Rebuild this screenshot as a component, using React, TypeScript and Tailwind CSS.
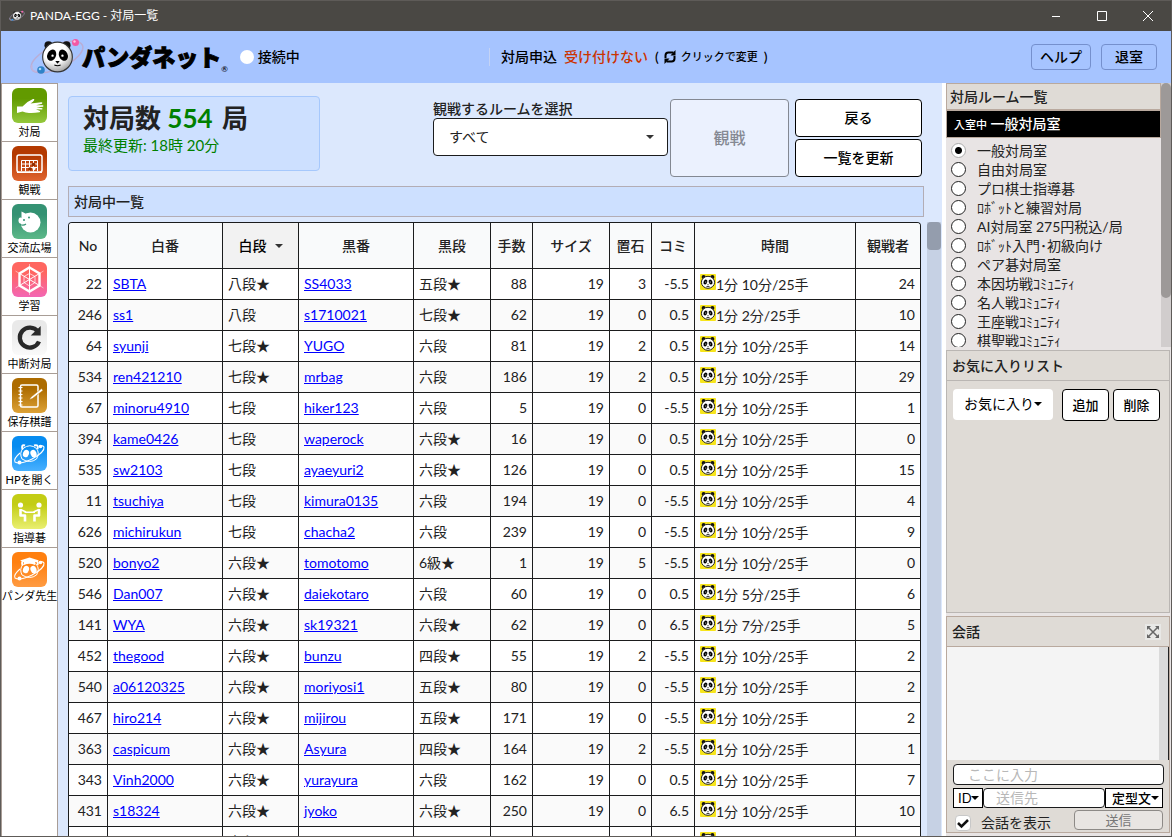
import React from "react";

interface Game {
  no: string;
  white: string;
  whiteRank: string;
  black: string;
  blackRank: string;
  moves: string;
  size: string;
  handicap: string;
  komi: string;
  time: string;
  viewers: string;
}

const game = (
  no: string,
  white: string,
  whiteRank: string,
  black: string,
  blackRank: string,
  moves: string,
  handicap: string,
  komi: string,
  viewers: string,
  time = "1分 10分/25手",
  size = "19"
): Game => ({ no, white, whiteRank, black, blackRank, moves, size, handicap, komi, time, viewers });

const games: Game[] = [
  game("22", "SBTA", "八段★", "SS4033", "五段★", "88", "3", "-5.5", "24"),
  game("246", "ss1", "八段", "s1710021", "七段★", "62", "0", "0.5", "10", "1分 2分/25手"),
  game("64", "syunji", "七段★", "YUGO", "六段", "81", "2", "0.5", "14"),
  game("534", "ren421210", "七段★", "mrbag", "六段", "186", "2", "0.5", "29"),
  game("67", "minoru4910", "七段", "hiker123", "六段", "5", "0", "-5.5", "1"),
  game("394", "kame0426", "七段", "waperock", "六段★", "16", "0", "0.5", "0"),
  game("535", "sw2103", "七段", "ayaeyuri2", "六段★", "126", "0", "0.5", "15"),
  game("11", "tsuchiya", "七段", "kimura0135", "六段", "194", "0", "-5.5", "4"),
  game("626", "michirukun", "七段", "chacha2", "六段", "239", "0", "-5.5", "9"),
  game("520", "bonyo2", "六段★", "tomotomo", "6級★", "1", "5", "-5.5", "0"),
  game("546", "Dan007", "六段★", "daiekotaro", "六段", "60", "0", "0.5", "6", "1分 5分/25手"),
  game("141", "WYA", "六段★", "sk19321", "六段★", "62", "0", "6.5", "5", "1分 7分/25手"),
  game("452", "thegood", "六段★", "bunzu", "四段★", "55", "2", "-5.5", "2"),
  game("540", "a06120325", "六段★", "moriyosi1", "五段★", "80", "0", "-5.5", "2"),
  game("467", "hiro214", "六段★", "mijirou", "五段★", "171", "0", "-5.5", "2"),
  game("363", "caspicum", "六段★", "Asyura", "四段★", "164", "2", "-5.5", "1"),
  game("343", "Vinh2000", "六段★", "yurayura", "六段", "162", "0", "0.5", "7"),
  game("431", "s18324", "六段★", "jyoko", "六段★", "250", "0", "6.5", "10"),
  game("", "", "六段", "", "", "", "", "", "", "1分 10分/25手", ""),
];

const rooms = [
  "一般対局室",
  "自由対局室",
  "プロ棋士指導碁",
  "ﾛﾎﾞｯﾄと練習対局",
  "AI対局室 275円税込/局",
  "ﾛﾎﾞｯﾄ入門･初級向け",
  "ペア碁対局室",
  "本因坊戦ｺﾐｭﾆﾃｨ",
  "名人戦ｺﾐｭﾆﾃｨ",
  "王座戦ｺﾐｭﾆﾃｨ",
  "棋聖戦ｺﾐｭﾆﾃｨ",
];

function Caret({ className }: { className: string }) {
  return (
    <svg viewBox="0 0 8 4" className={className} aria-hidden="true">
      <path d="M0 0h8L4 4z" fill="currentColor" />
    </svg>
  );
}

function PandaHead() {
  return (
    <g>
      <circle cx="10" cy="7" r="4.5" fill="#111" />
      <circle cx="30" cy="7" r="4.5" fill="#111" />
      <circle cx="20" cy="20" r="16.5" fill="url(#face)" stroke="#333" strokeWidth="1.2" />
      <ellipse cx="13.5" cy="18" rx="4.8" ry="6.5" fill="#000" transform="rotate(24 13.5 18)" />
      <ellipse cx="26.5" cy="18" rx="4.8" ry="6.5" fill="#000" transform="rotate(-24 26.5 18)" />
      <circle cx="14.5" cy="18.5" r="1.3" fill="#fff" />
      <circle cx="25.5" cy="18.5" r="1.3" fill="#fff" />
      <path d="M17.5 24.5h5l-2.5 3z" fill="#000" />
      <path d="M16.5 29q3.5 1.5 7 0" fill="none" stroke="#000" strokeWidth="1.2" />
    </g>
  );
}

function OrbitPanda({ className }: { className: string }) {
  return (
    <svg viewBox="0 0 56 40" className={className} aria-hidden="true">
      <defs>
        <radialGradient id="face" cx="0.4" cy="0.3" r="0.75">
          <stop offset="0.5" stopColor="#fff" />
          <stop offset="1" stopColor="#9a9a9a" />
        </radialGradient>
      </defs>
      <ellipse cx="28" cy="20" rx="28" ry="11.5" transform="rotate(-25 28 20)" fill="none" stroke="#b9aed6" strokeWidth="1.5" />
      <g transform="translate(10.5 2) scale(.9)">
        <PandaHead />
      </g>
      <path d="M3 28Q1 36 11 34" fill="none" stroke="#c0b5dd" strokeWidth="1.5" />
      <circle cx="46.5" cy="5.5" r="3.5" fill="#f358a6" />
      <circle cx="45.5" cy="4.5" r="1.2" fill="#ffc2e0" />
      <circle cx="12" cy="33" r="3.8" fill="#2f83c8" />
      <circle cx="11" cy="32" r="1.3" fill="#a9d8f7" />
    </svg>
  );
}

function PandaBadge() {
  return (
    <svg viewBox="0 0 16 16" className="h-4 w-4 shrink-0 self-start" aria-hidden="true">
      <rect width="16" height="16" rx="1" fill="#f7e51b" />
      <circle cx="3.6" cy="3" r="2" fill="#111" />
      <circle cx="12.4" cy="3" r="2" fill="#111" />
      <ellipse cx="8" cy="8.3" rx="6.6" ry="6" fill="#fff" stroke="#222" strokeWidth="1" />
      <ellipse cx="5.4" cy="8" rx="1.8" ry="2.5" transform="rotate(24 5.4 8)" />
      <ellipse cx="10.6" cy="8" rx="1.8" ry="2.5" transform="rotate(-24 10.6 8)" />
      <circle cx="5.8" cy="8" r=".6" fill="#fff" />
      <circle cx="10.2" cy="8" r=".6" fill="#fff" />
      <path d="M7 10.5h2l-1 1zM6.5 12.2h3v.7h-3z" />
    </svg>
  );
}

interface TileProps {
  id: string;
  from: string;
  to: string;
  children: React.ReactNode;
}

function Tile({ id, from, to, children }: TileProps) {
  return (
    <svg viewBox="0 0 35 35" className="h-[35px] w-[35px]" aria-hidden="true">
      <defs>
        <linearGradient id={id} x1="0" y1="0" x2="0" y2="1">
          <stop offset="0.3" stopColor={from} />
          <stop offset="1" stopColor={to} />
        </linearGradient>
      </defs>
      <rect width="35" height="35" rx="6" fill={`url(#${id})`} />
      {children}
    </svg>
  );
}

function OrbitGlyph({ hat }: { hat?: boolean }) {
  return (
    <g fill="none" stroke="#fff">
      <path d="M10.5 13.5Q9 8 13 9.5M22 9.5Q27 8 25.5 13" strokeWidth="2" />
      <path d="M10 23Q7 17 11 12.5Q18 7 24.5 12.5Q28 17 24.5 23Q18 28 10 23Z" strokeWidth="1" />
      <ellipse cx="14" cy="17.5" rx="3" ry="3.8" fill="#fff" stroke="none" transform="rotate(20 14 17.5)" />
      <ellipse cx="21.5" cy="17.5" rx="3" ry="3.8" fill="#fff" stroke="none" transform="rotate(-20 21.5 17.5)" />
      <path d="M8 17Q1 23 3 26Q8 29 20 23Q33 16 32 11Q31 9 27 10" strokeWidth="1.1" />
      <circle cx="28.5" cy="10.5" r="1.8" fill="#fff" stroke="none" />
      <circle cx="7.5" cy="26.5" r="2" fill="#fff" stroke="none" />
      {hat && <path d="M8 8.5l9.5-3 9.5 3-4 1.5v3q-5.5-2.5-11 0v-3z" fill="#fff" stroke="none" />}
    </g>
  );
}

const menu = [
  {
    label: "対局",
    icon: (
      <Tile id="g-play" from="#629a00" to="#94c83c">
        <path
          d="M5 18.5h5.5L15.5 14L21 11Q22.5 10.5 22.3 12Q21.5 13.5 18.5 15.5L29.5 14.2Q31 14.5 30 15.7L24 17.2L31 17.3Q32 18 31 18.8L24.5 19.2L30.3 20.2Q31 21 30 21.6L24 21.2L28 23Q28.5 24 27.5 24.3Q22 25.3 17 25Q13.5 24.8 10.5 23.5L5 25z"
          fill="#fff"
        />
      </Tile>
    ),
  },
  {
    label: "観戦",
    icon: (
      <Tile id="g-watch" from="#b43900" to="#e06530">
        <g fill="none" stroke="#fff">
          <rect x="5" y="9" width="25" height="17" rx="2" strokeWidth="1.5" />
          <path d="M9.5 25V14.5h16V25M9.5 18h16M9.5 21.5h16M13.5 14.5v11M17.5 14.5v11M21.5 14.5v11" />
          <path d="M5 26.5h25" />
        </g>
        <circle cx="21.5" cy="18.5" r="1.8" fill="#8f2d00" />
        <circle cx="18" cy="23" r="1.8" fill="#8f2d00" />
        <circle cx="22" cy="22.5" r="1.5" fill="#fff" />
      </Tile>
    ),
  },
  {
    label: "交流広場",
    icon: (
      <Tile id="g-plaza" from="#349273" to="#5cb888">
        <circle cx="18.5" cy="18.5" r="10" fill="#fff" />
        <path d="M9.5 14.5L9.5 7.5L14 9.8L20 9L18 13z" fill="#fff" />
        <ellipse cx="8.5" cy="16.5" rx="2" ry="3" fill="#fff" />
        <circle cx="12" cy="16" r="1" fill="#349273" />
        <circle cx="17" cy="13.5" r="1" fill="#349273" />
        <path d="M8 20.5q3.5 1.5 6-.5" fill="none" stroke="#349273" strokeWidth="1.2" />
      </Tile>
    ),
  },
  {
    label: "学習",
    icon: (
      <Tile id="g-study" from="#ff6660" to="#f366b4">
        <g fill="none" stroke="#fff">
          <path d="M17.5 5.5L27.5 11.5V23.5L17.5 29.5L7.5 23.5V11.5Z" strokeWidth="2.4" />
          <path d="M17.5 5v25M7.5 11.5l20 12M27.5 11.5l-20 12" />
          <path d="M17.5 11.5l5.5 3v6l-5.5 3.5-5.5-3.5v-6z" strokeWidth=".7" />
          <path d="M17.5 2v3M3.5 9l4 2.5M31.5 9l-4 2.5M3.5 26l4-2.5M31.5 26l-4-2.5M17.5 30v3" strokeWidth=".5" />
        </g>
      </Tile>
    ),
  },
  {
    label: "中断対局",
    icon: (
      <Tile id="g-resume" from="#e9e9e9" to="#fafafa">
        <path d="M25.8 11.5A10 10 0 1 0 27 21.5" fill="none" stroke="#292929" strokeWidth="4.3" />
        <path d="M28.7 6v9.5h-10z" fill="#292929" />
      </Tile>
    ),
  },
  {
    label: "保存棋譜",
    icon: (
      <Tile id="g-record" from="#ad6c00" to="#dda236">
        <g fill="none" stroke="#fff">
          <rect x="8.5" y="7" width="17.5" height="22" rx="1.5" strokeWidth="1.5" />
          <path d="M6.5 9.5h4M6.5 13h4M6.5 16.5h4M6.5 20h4M6.5 23.5h4M6.5 27h4" />
        </g>
        <path d="M19 19L29.5 10.5L31 12.5L20.5 20.5L17 22z" fill="#fff" stroke="#b87509" strokeWidth=".6" />
      </Tile>
    ),
  },
  {
    label: "HPを開く",
    icon: (
      <Tile id="g-home" from="#078cf0" to="#48b0ff">
        <OrbitGlyph />
      </Tile>
    ),
  },
  {
    label: "指導碁",
    icon: (
      <Tile id="g-teach" from="#c3cd15" to="#e9ef70">
        <circle cx="8.5" cy="11" r="2.6" fill="#fff" />
        <circle cx="27" cy="11" r="2.6" fill="#fff" />
        <g fill="none" stroke="#fff" strokeWidth="2.6" strokeLinejoin="round">
          <path d="M8.5 15v6.5h4.5v6" />
          <path d="M27 15v6.5h-4.5v6" />
        </g>
        <path d="M8.5 15.5l5.5 2.5M27 15.5l-5.5 2.5M12.5 18.3h10.5" fill="none" stroke="#fff" strokeWidth="1.5" />
      </Tile>
    ),
  },
  {
    label: "パンダ先生",
    icon: (
      <Tile id="g-sensei" from="#ff8010" to="#ff9b42">
        <OrbitGlyph hat />
      </Tile>
    ),
  },
];

function TitleBar() {
  return (
    <div className="flex h-[31px] shrink-0 items-center justify-between border-t border-[#5e5b58] bg-[#4a4844] pl-2 text-white">
      <div className="flex items-center gap-[5px] text-xs">
        <OrbitPanda className="h-3 w-4" />
        <span>PANDA-EGG - 対局一覧</span>
      </div>
      <div className="flex items-center">
        <button type="button" aria-label="最小化" className="flex h-7 w-[46px] items-center justify-center">
          <svg viewBox="0 0 10 10" className="h-2.5 w-2.5" stroke="currentColor"><path d="M1 5.5h8" /></svg>
        </button>
        <button type="button" aria-label="最大化" className="flex h-7 w-[46px] items-center justify-center">
          <svg viewBox="0 0 10 10" className="h-2.5 w-2.5" fill="none" stroke="currentColor"><path d="M.5.5h9v9h-9z" /></svg>
        </button>
        <button type="button" aria-label="閉じる" className="flex h-7 w-[46px] items-center justify-center">
          <svg viewBox="0 0 10 10" className="h-2.5 w-2.5" stroke="currentColor"><path d="M0 0l10 10M10 0L0 10" /></svg>
        </button>
      </div>
    </div>
  );
}

function Header() {
  return (
    <header className="grid h-[52px] shrink-0 grid-cols-[488px_1fr_auto] items-center bg-[#a6c4ff] pr-[14px] text-sm font-medium text-black">
      <div className="flex items-center pl-7">
        <OrbitPanda className="h-10 w-14" />
        <span className="ml-[-3px] text-[23px] leading-8 font-black [-webkit-text-stroke:1px_black]">パンダネット</span>
        <span className="self-end text-[8px] leading-4">®</span>
        <span className="ml-3 h-3.5 w-3.5 rounded-full bg-white" />
        <span className="ml-1">接続中</span>
      </div>
      <div className="flex items-center">
        <span className="mr-[11px] h-[18px] w-px bg-[#c4d3f5]" />
        <span>対局申込</span>
        <span className="ml-[7px] text-[#cc3300]">受け付けない</span>
        <button type="button" className="ml-[7px] flex items-center">
          <span>(</span>
          <svg viewBox="0 0 14 14" className="mx-1 h-3.5 w-3.5" aria-hidden="true">
            <g fill="none" stroke="#000" strokeWidth="2">
              <path d="M2.5 8V5.5q0-3 3-3h5" />
              <path d="M11.5 6v2.5q0 3-3 3h-5" />
            </g>
            <path d="M12.5 0v5.5H7.5zM1.5 14V8.5h5z" />
          </svg>
          <span className="text-[11px]">クリックで変更</span>
          <span className="ml-1.5">)</span>
        </button>
      </div>
      <div className="flex gap-2.5">
        <button type="button" className="h-[26px] w-[60px] rounded border border-[#7590cd]">ヘルプ</button>
        <button type="button" className="h-[26px] w-14 rounded border border-[#7590cd]">退室</button>
      </div>
    </header>
  );
}

function SideMenu() {
  return (
    <nav className="w-[57px] shrink-0 border-x border-t border-[#a89d96] bg-white">
      {menu.map((item) => (
        <a key={item.label} href="#" className="flex h-[58px] flex-col items-center border-b border-[#a89d96] pt-1 text-[11px] leading-[18px] whitespace-nowrap text-black last:border-b-0">
          {item.icon}
          <span>{item.label}</span>
        </a>
      ))}
    </nav>
  );
}

function Summary() {
  return (
    <div className="flex items-start justify-between pr-0.5">
      <div className="h-[75px] w-[252px] rounded border border-[#a6c8fc] bg-[#cde0ff] pt-[3px] pl-3.5 text-[#222]">
        <h1 className="text-[26px] leading-9 font-bold">
          対局数 <span className="mr-[3px] text-[#008000]">554</span> 局
        </h1>
        <p className="text-[15px] leading-[18px] text-[#008000]">最終更新: 18時 20分</p>
      </div>
      <div className="flex items-start pt-[3px]">
        <div className="w-[235px]">
          <label htmlFor="room" className="block text-sm leading-[19px] font-medium text-[#222]">観戦するルームを選択</label>
          <div className="relative">
            <select id="room" className="h-[38px] w-full appearance-none rounded border border-[#1b1c1d] bg-white px-[15px] text-sm text-[#222]">
              <option>すべて</option>
            </select>
            <Caret className="pointer-events-none absolute top-[17px] right-3.5 h-1 w-2 text-[#333]" />
          </div>
        </div>
        <button type="button" disabled className="ml-0.5 h-[78px] w-[119px] rounded border border-[#838892] bg-[#ebf1fe] text-base font-medium text-[#858993]">
          観戦
        </button>
        <div className="ml-1.5 flex w-[127px] flex-col gap-0.5 text-sm font-medium text-black">
          <button type="button" className="h-[38px] rounded border border-black bg-white">戻る</button>
          <button type="button" className="h-[38px] rounded border border-black bg-white">一覧を更新</button>
        </div>
      </div>
    </div>
  );
}

function GameTable() {
  return (
    <div className="min-w-0 flex-1 overflow-hidden rounded-t border border-b-0 border-[#1b1c1d]">
      <table className="w-full table-fixed border-separate border-spacing-0 text-sm text-[#222] [&_td]:h-[31px] [&_td]:border-r [&_td]:border-b [&_td]:border-[#1b1c1d] [&_td]:px-[5px] [&_td]:leading-5 [&_td:last-child]:border-r-0 [&_th]:h-[46px] [&_th]:border-r [&_th]:border-b [&_th]:border-[#1b1c1d] [&_th]:font-medium [&_th:last-child]:border-r-0">
        <colgroup>
          <col className="w-[39px]" />
          <col className="w-[115px]" />
          <col className="w-[76px]" />
          <col className="w-[115px]" />
          <col className="w-[77px]" />
          <col className="w-[42px]" />
          <col className="w-[77px]" />
          <col className="w-[42px]" />
          <col className="w-[43px]" />
          <col />
          <col className="w-16" />
        </colgroup>
        <thead className="bg-[#f9fafb]">
          <tr>
            <th>No</th>
            <th>白番</th>
            <th className="bg-[#f2f2f2] text-black">
              <span className="inline-flex items-center gap-2">
                白段 <Caret className="h-1 w-2 text-[#333]" />
              </span>
            </th>
            <th>黒番</th>
            <th>黒段</th>
            <th>手数</th>
            <th>サイズ</th>
            <th>置石</th>
            <th>コミ</th>
            <th>時間</th>
            <th>観戦者</th>
          </tr>
        </thead>
        <tbody>
          {games.map((g, i) => (
            <tr key={i} className="bg-white even:bg-[#fafafa]">
              <td className="text-right">{g.no}</td>
              <td><a href="#" className="text-[#0000ff] underline">{g.white}</a></td>
              <td>{g.whiteRank}</td>
              <td><a href="#" className="text-[#0000ff] underline">{g.black}</a></td>
              <td>{g.blackRank}</td>
              <td className="text-right">{g.moves}</td>
              <td className="text-right">{g.size}</td>
              <td className="text-right">{g.handicap}</td>
              <td className="text-right">{g.komi}</td>
              <td>
                <span className="flex">
                  <PandaBadge />
                  <span className="pt-px">{g.time}</span>
                </span>
              </td>
              <td className="text-right">{g.viewers}</td>
            </tr>
          ))}
        </tbody>
      </table>
    </div>
  );
}

function RoomPanel() {
  return (
    <section className="flex h-[264px] shrink-0 bg-[#e8e4e4]">
      <div className="min-w-0 flex-1 overflow-hidden">
        <h2 className="h-[27px] border border-[#b9a99e] bg-[#dfdbd6] px-[3px] text-sm leading-[25px] font-medium text-[#222]">対局ルーム一覧</h2>
        <p className="h-7 border border-[#b9a99e] bg-black pl-[7px] text-sm leading-[26px] font-medium text-white">
          <span className="text-[11px]">入室中</span> 一般対局室
        </p>
        <div className="pt-[3px]">
          {rooms.map((room, i) => (
            <label key={room} className="flex h-[19px] items-center gap-[11px] pl-[5px] text-sm leading-[19px] whitespace-nowrap text-[#222]">
              <input
                type="radio"
                name="room"
                defaultChecked={i === 0}
                className="h-[15px] w-[15px] shrink-0 appearance-none rounded-full border border-[#222] bg-white checked:border-[#aaa] checked:bg-[radial-gradient(circle,#000_3px,#fff_4px)]"
              />
              {room}
            </label>
          ))}
        </div>
      </div>
      <div className="w-2.5 shrink-0 bg-[#d1cdcd]">
        <div className="h-[215px] rounded-full bg-[#9d9998]" />
      </div>
    </section>
  );
}

function FavoritePanel() {
  return (
    <section className="mt-[3px] mr-px min-h-0 flex-1 border border-[#bab6b3] bg-[#dfdbd6] text-sm">
      <h2 className="h-[30px] border-b border-[#bab6b3] px-[5px] leading-[29px] font-medium text-[#222]">お気に入りリスト</h2>
      <div className="flex items-start pt-2 pr-[9px] pl-1.5">
        <div className="relative mr-auto w-[100px] shrink-0">
          <select aria-label="お気に入り" className="h-[31px] w-full appearance-none rounded bg-white pb-0.5 pl-[11px] text-sm text-black">
            <option>お気に入り</option>
          </select>
          <Caret className="pointer-events-none absolute top-[13px] right-[11px] h-1 w-2" />
        </div>
        <button type="button" className="mr-1 h-8 w-[47px] rounded border border-black bg-white text-[13px] font-medium text-black">追加</button>
        <button type="button" className="h-8 w-[47px] rounded border border-black bg-white text-[13px] font-medium text-black">削除</button>
      </div>
    </section>
  );
}

function ChatPanel() {
  return (
    <section className="mt-[3px] mr-px mb-[3px] flex h-[217px] shrink-0 flex-col border border-[#b9a99e] bg-[#dfdbd6] text-sm">
      <div className="flex h-[30px] shrink-0 items-center justify-between border-b border-[#b9a99e] pr-2 pl-[5px]">
        <h2 className="font-medium text-[#222]">会話</h2>
        <button type="button" aria-label="拡大" className="flex h-4 w-4 items-center justify-center bg-[#e8e8e6]">
          <svg viewBox="0 0 14 14" className="h-3.5 w-3.5" aria-hidden="true">
            <path d="M2 2l10 10M12 2L2 12" stroke="#666" strokeWidth="1.5" />
            <path d="M1 1h4L1 5zM13 1v4L9 1zM1 13V9l4 4zM13 13H9l4-4z" fill="#666" />
          </svg>
        </button>
      </div>
      <div className="flex min-h-0 flex-1 bg-[#f4f4f4]">
        <div className="ml-auto w-2.5 border-r border-[#222] bg-[#dadada]" />
      </div>
      <form className="flex shrink-0 flex-col pt-1 pr-[5px] pl-1.5">
        <input aria-label="ここに入力" placeholder="ここに入力" className="h-[21px] w-full rounded border border-[#1b1c1d] bg-white px-3.5 placeholder:text-[#b8b8b8]" />
        <div className="mt-[3px] flex h-5 pr-px">
          <div className="relative w-[30px] shrink-0">
            <select aria-label="ID" className="h-5 w-full appearance-none border border-black bg-white pl-1 text-[13px] leading-4 text-black">
              <option>ID</option>
            </select>
            <Caret className="pointer-events-none absolute top-2 right-1 h-1 w-2" />
          </div>
          <input aria-label="送信先" placeholder="送信先" className="min-w-0 flex-1 rounded border border-[#1b1c1d] bg-white px-3 placeholder:text-[#b8b8b8]" />
          <div className="relative w-[58px] shrink-0">
            <select aria-label="定型文" className="h-5 w-full appearance-none border border-black bg-white pl-1.5 text-[13px] leading-4 font-medium text-black">
              <option>定型文</option>
            </select>
            <Caret className="pointer-events-none absolute top-2 right-1 h-1 w-2" />
          </div>
        </div>
        <div className="flex h-6 items-start justify-between pt-0.5 pr-px">
          <label className="flex h-[26px] items-center gap-2.5 text-[#222]">
            <span className="relative ml-0.5 h-4 w-4">
              <input type="checkbox" defaultChecked className="block h-4 w-4 appearance-none rounded-sm border border-[#c8c8c8] bg-white" />
              <svg viewBox="0 0 16 16" className="pointer-events-none absolute inset-0 h-4 w-4" fill="none" aria-hidden="true">
                <path d="M3 8l3.5 3.5L13 5" stroke="#111" strokeWidth="2.5" />
              </svg>
            </span>
            会話を表示
          </label>
          <button type="button" disabled className="h-5 w-[89px] rounded border border-[#8d8a87] bg-[#e8e5e2] text-[13px] leading-4 text-[#777]">送信</button>
        </div>
      </form>
    </section>
  );
}

export default function App() {
  return (
    <div className="flex h-screen min-w-[1000px] flex-col overflow-hidden border-r border-b border-l border-[#5e5b58] bg-white font-[Lato,'Noto_Sans_CJK_JP',sans-serif]">
      <TitleBar />
      <Header />
      <div className="flex min-h-0 flex-1">
        <SideMenu />
        <main className="flex min-w-0 flex-1 flex-col bg-[#dce8fd] pt-[13px] pl-2.5">
          <div className="pr-[18px]">
            <Summary />
            <h2 className="mt-[9px] h-[31px] border border-[#b3adb5] bg-[#cde0ff] px-[5px] text-sm leading-[29px] font-medium text-[#222]">対局中一覧</h2>
          </div>
          <div className="mt-[5px] flex min-h-0 flex-1 pr-px">
            <GameTable />
            <div className="ml-1.5 w-3.5 shrink-0 bg-[#c6d1e4]">
              <div className="h-7 rounded bg-[#949dad]" />
            </div>
          </div>
        </main>
        <aside className="ml-1 flex w-[225px] shrink-0 flex-col bg-[#e8e4e4]">
          <RoomPanel />
          <FavoritePanel />
          <ChatPanel />
        </aside>
      </div>
    </div>
  );
}
